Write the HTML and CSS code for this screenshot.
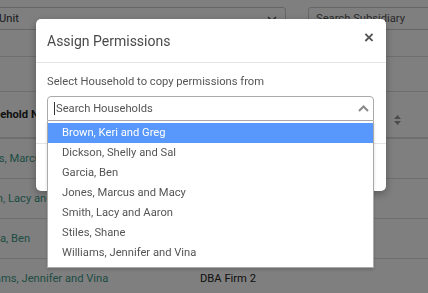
FILE: index.html
```html
<!DOCTYPE html>
<html>
<head>
<meta charset="utf-8">
<link rel="stylesheet" href="styles.css">
</head>
<body>
<div class="page">
  <div class="filters">
    <div class="fselect"><span>Business Unit</span>
      <svg class="fchev" width="10" height="6" viewBox="0 0 10 6"><path d="M1 1 L5 5 L9 1" fill="none" stroke="#555" stroke-width="1.6"/></svg>
    </div>
    <div class="finput">Search Subsidiary</div>
  </div>
  <div class="band band-a"></div>
  <div class="band band-b"></div>
  <div class="thead">
    <div class="c1 th">Household Name</div>
    <div class="c2 th">DBA</div>
    <div class="c3"><svg width="7" height="10" viewBox="0 0 7 10"><path d="M3.5 0 L7 4 L0 4 Z M3.5 10 L7 6 L0 6 Z" fill="#999"/></svg></div>
  </div>
  <div class="trow"><div class="c1 link">Jones, Marcus and Macy</div><div class="c2">DBA Firm 1</div></div>
  <div class="trow"><div class="c1 link">Smith, Lacy and Aaron</div><div class="c2">DBA Firm 1</div></div>
  <div class="trow"><div class="c1 link">Garcia, Ben</div><div class="c2">DBA Firm 3</div></div>
  <div class="trow"><div class="c1 link">Williams, Jennifer and Vina</div><div class="c2">DBA Firm 2</div></div>
</div>

<div class="backdrop"></div>

<div class="modal">
  <div class="modal-header">
    <h4 class="modal-title">Assign Permissions</h4>
    <span class="close">×</span>
  </div>
  <div class="modal-body">
    <label class="label">Select Household to copy permissions from</label>
    <div class="s2">
      <div class="s2-box">
        <span class="caret"></span><span class="ph">Search Households</span>
        <svg class="s2-chev" width="11" height="7" viewBox="0 0 11 7"><path d="M1 6 L5.5 1.5 L10 6" fill="none" stroke="#888" stroke-width="2"/></svg>
      </div>
      <ul class="s2-list">
        <li class="opt active">Brown, Keri and Greg</li>
        <li class="opt">Dickson, Shelly and Sal</li>
        <li class="opt">Garcia, Ben</li>
        <li class="opt">Jones, Marcus and Macy</li>
        <li class="opt">Smith, Lacy and Aaron</li>
        <li class="opt">Stiles, Shane</li>
        <li class="opt">Williams, Jennifer and Vina</li>
      </ul>
    </div>
  </div>
  <div class="modal-footer"></div>
</div>
</body>
</html>
```
FILE: styles.css
```css
* { box-sizing: border-box; }
html, body { margin: 0; padding: 0; }
body {
  width: 428px;
  height: 293px;
  overflow: hidden;
  background: #fff;
  font-family: Roboto, "Liberation Sans", sans-serif;
  font-size: 11.2px;
  color: #222;
}
.page { width: 428px; height: 293px; overflow: hidden; }

.filters {
  display: flex;
  gap: 22px;
  padding-top: 7px;
  height: 30px;
}
.fselect {
  flex: 0 0 334px;
  margin-left: -48px;
  height: 23px;
  border: 1px solid #ccc;
  border-radius: 3px;
  display: flex;
  align-items: center;
  justify-content: space-between;
  padding: 0 7px 0 0;
  color: #333;
}
.fselect span { margin-left: -2px; }
.fchev { margin-right: 1px; }
.finput {
  flex: 0 0 140px;
  height: 23px;
  border: 1px solid #ccc;
  border-radius: 3px;
  padding-left: 7px;
  display: flex;
  align-items: center;
  color: #555;
}
.band { border-bottom: 1px solid #ddd; }
.band-a { height: 27px; }
.band-b { height: 35px; }
.thead {
  height: 47px;
  border-bottom: 2px solid #ddd;
  display: flex;
  align-items: center;
  font-weight: bold;
  color: #222;
}
.trow {
  height: 40px;
  border-bottom: 1px solid #ddd;
  display: flex;
  align-items: center;
}
.c1 { flex: 0 0 226px; margin-left: -26px; white-space: nowrap; }
.c2 { flex: 0 0 194px; white-space: nowrap; }
.c3 { padding-top: 13px; }
.link { color: #3c9a87; }

.backdrop {
  position: fixed;
  inset: 0;
  background: rgba(0, 0, 0, 0.5);
}

.modal {
  position: fixed;
  left: 36px;
  top: 19px;
  width: 350px;
  background: #fff;
  border-radius: 5px;
  box-shadow: 0 3px 8px rgba(0, 0, 0, 0.3);
}
.modal-header {
  height: 44px;
  border-bottom: 1px solid #e5e5e5;
  display: flex;
  align-items: center;
  justify-content: space-between;
  padding: 0 12px 0 11px;
}
.modal-title {
  margin: 0;
  font-size: 14px;
  font-weight: normal;
  color: #4a4a4a;
}
.close {
  align-self: flex-start;
  margin-top: 10px;
  font-family: "Liberation Sans", Arial, sans-serif;
  font-size: 17px;
  font-weight: bold;
  color: #555;
  line-height: 1;
}
.modal-body {
  padding: 11px 12px 22px 11px;
}
.label {
  display: block;
  line-height: 16px;
  margin-bottom: 6px;
  color: #555;
}
.s2 { position: relative; }
.s2-box {
  height: 25px;
  border: 1px solid #aaa;
  border-radius: 4px 4px 0 0;
  display: flex;
  align-items: center;
  padding: 0 4px 0 6px;
  color: #555;
}
.caret {
  width: 1px;
  height: 13px;
  background: #333;
  margin-right: 1px;
}
.ph { flex: 1; }
.s2-list {
  position: absolute;
  top: 100%;
  left: 0;
  right: 0;
  margin: 0;
  padding: 2px 0 4px;
  list-style: none;
  background: #fff;
  border: 1px solid #aaa;
  border-top: none;
  box-shadow: 0 2px 3px rgba(0, 0, 0, 0.15);
  z-index: 2;
}
.opt {
  height: 20px;
  line-height: 20px;
  padding-left: 14px;
  color: #555;
}
.opt.active {
  background: #5897fb;
  color: #fff;
}
.modal-footer {
  height: 48px;
  border-top: 1px solid #e5e5e5;
}
```
